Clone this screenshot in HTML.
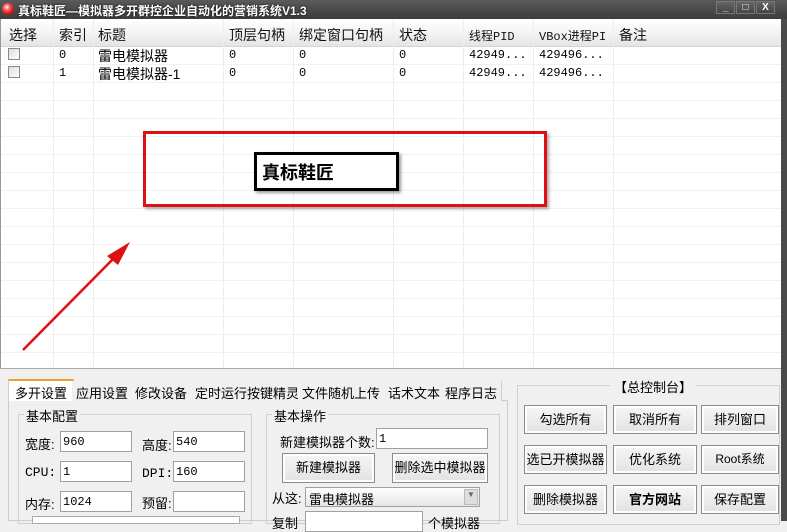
<!DOCTYPE html>
<html><head><meta charset="utf-8"><style>
*{margin:0;padding:0;box-sizing:border-box}
body{width:787px;height:521px;overflow:hidden;background:#f0f0f0;font-family:"Liberation Sans","Noto Sans CJK SC","WenQuanYi Zen Hei",sans-serif;font-size:13px;color:#000;position:relative}
.a{position:absolute;white-space:nowrap}
.title{left:0;top:0;width:787px;height:19px;background:linear-gradient(#5a5a5a,#3c3c3c);}
.tb{top:1px;width:19px;height:13px;border:1px solid #777;background:linear-gradient(#666,#444);color:#fff;font-size:10px;text-align:center;line-height:11px;font-weight:bold}
.list{left:0;top:19px;width:781px;height:350px;background:#fff;border-left:1px solid #999;border-bottom:1px solid #aaa;overflow:hidden}
.hdr{left:0;top:0;width:781px;height:28px;background:linear-gradient(#fff 0%,#f4f4f4 50%,#e4e4e4 100%);border-bottom:1px solid #d5d5d5}
.vl{top:0;width:1px;height:350px;background:#ededed}
.hl{left:0;height:1px;width:781px;background:#f1f1f1}
.h{top:6px;font-size:14px;color:#111}
.c{font-size:12px;font-family:"Liberation Mono","Noto Sans CJK SC",monospace}
.cb{width:12px;height:12px;border:1px solid #8a8a8a;background:linear-gradient(135deg,#ddd,#fff)}
.inp{background:#fff;border:1px solid #a0a0a0;height:21px;font-size:12px;padding:3px 0 0 2px;font-family:"Liberation Mono",monospace}
.btn{border:1px solid #8c8c8c;background:linear-gradient(#f6f6f6,#e2e2e2);box-shadow:inset 0 0 0 2px #fdfdfd;text-align:center;font-size:13px}
.grp{border:1px solid #d0d0d0}
.lbl{font-size:13px}
.tab{top:381px;height:20px;font-size:13px;padding:2px 4px 0 4px;border-right:1px solid #ccc;background:#f0f0f0}
</style></head><body>
<div class="a title"></div>
<div class="a" style="left:2px;top:3px;width:12px;height:12px;border-radius:50%;background:radial-gradient(circle at 40% 35%,#fff 0,#f55 30%,#a00 80%)"></div>
<div class="a" style="left:18px;top:2px;color:#fff;font-weight:bold;font-size:12px;text-shadow:0 0 2px #000">真标鞋匠—模拟器多开群控企业自动化的营销系统V1.3</div>
<div class="a tb" style="left:716px">_</div><div class="a tb" style="left:736px">□</div><div class="a tb" style="left:756px">X</div>
<div class="a" style="left:781px;top:19px;width:6px;height:502px;background:#4a4a4a"></div>

<div class="a list">
<div class="a hdr"></div>
<div class="a hl" style="top:45px"></div>
<div class="a hl" style="top:63px"></div>
<div class="a hl" style="top:81px"></div><div class="a hl" style="top:99px"></div><div class="a hl" style="top:117px"></div><div class="a hl" style="top:135px"></div><div class="a hl" style="top:153px"></div><div class="a hl" style="top:171px"></div><div class="a hl" style="top:189px"></div><div class="a hl" style="top:207px"></div><div class="a hl" style="top:225px"></div><div class="a hl" style="top:243px"></div><div class="a hl" style="top:261px"></div><div class="a hl" style="top:279px"></div><div class="a hl" style="top:297px"></div><div class="a hl" style="top:315px"></div><div class="a hl" style="top:333px"></div>
<div class="a vl" style="left:52px"></div><div class="a vl" style="left:92px"></div><div class="a vl" style="left:222px"></div><div class="a vl" style="left:292px"></div><div class="a vl" style="left:392px"></div><div class="a vl" style="left:462px"></div><div class="a vl" style="left:532px"></div><div class="a vl" style="left:612px"></div>
<div class="a h" style="left:8px">选择</div><div class="a h" style="left:58px">索引</div><div class="a h" style="left:97px">标题</div><div class="a h" style="left:228px">顶层句柄</div><div class="a h" style="left:298px">绑定窗口句柄</div><div class="a h" style="left:398px">状态</div><div class="a h c" style="left:468px;top:8px">线程PID</div><div class="a h c" style="left:538px;top:8px">VBox进程PI</div><div class="a h" style="left:618px">备注</div>
<div class="a cb" style="left:7px;top:29px"></div><div class="a cb" style="left:7px;top:47px"></div>
<div class="a c" style="left:58px;top:29px">0</div><div class="a" style="left:97px;top:27px;font-size:14px">雷电模拟器</div><div class="a c" style="left:228px;top:29px">0</div><div class="a c" style="left:298px;top:29px">0</div><div class="a c" style="left:398px;top:29px">0</div><div class="a c" style="left:468px;top:29px">42949...</div><div class="a c" style="left:538px;top:29px">429496...</div>
<div class="a c" style="left:58px;top:47px">1</div><div class="a" style="left:97px;top:45px;font-size:14px">雷电模拟器-1</div><div class="a c" style="left:228px;top:47px">0</div><div class="a c" style="left:298px;top:47px">0</div><div class="a c" style="left:398px;top:47px">0</div><div class="a c" style="left:468px;top:47px">42949...</div><div class="a c" style="left:538px;top:47px">429496...</div>
</div>

<div class="a" style="left:143px;top:131px;width:404px;height:76px;border:3px solid #dd1111;box-shadow:2px 2px 3px rgba(0,0,0,.35)"></div>
<div class="a" style="left:254px;top:152px;width:145px;height:39px;border:3px solid #000;background:#fff;box-shadow:2px 2px 3px rgba(0,0,0,.4)"></div>
<div class="a" style="left:262px;top:159px;font-size:18px;font-weight:bold">真标鞋匠</div>
<svg class="a" style="left:0;top:0" width="787" height="521"><line x1="23" y1="350" x2="118" y2="254" stroke="#dd1111" stroke-width="2.5"/><polygon points="130,242 107,256 118,265" fill="#dd1111"/></svg>

<div class="a" style="left:8px;top:400px;width:500px;height:121px;border:1px solid #ccc;background:#f0f0f0"></div>
<div class="a tab" style="left:8px;top:379px;height:22px;background:#fff;border:1px solid #ccc;border-top:2px solid #f0a030;border-bottom:none;padding:2px 6px 0 6px">多开设置</div>
<div class="a tab" style="left:72px">应用设置</div><div class="a tab" style="left:131px">修改设备</div><div class="a tab" style="left:191px">定时运行按键精灵</div><div class="a tab" style="left:298px">文件随机上传</div><div class="a tab" style="left:384px">话术文本</div><div class="a tab" style="left:441px">程序日志</div>

<div class="a grp" style="left:18px;top:414px;width:234px;height:110px"></div>
<div class="a lbl" style="left:24px;top:406px;background:#f0f0f0;padding:0 2px">基本配置</div>
<div class="a lbl" style="left:25px;top:434px">宽度:</div><div class="a inp" style="left:60px;top:431px;width:72px">960</div>
<div class="a lbl" style="left:142px;top:435px">高度:</div><div class="a inp" style="left:173px;top:431px;width:72px">540</div>
<div class="a lbl c" style="left:25px;top:465px">CPU:</div><div class="a inp" style="left:60px;top:461px;width:72px">1</div>
<div class="a lbl c" style="left:142px;top:466px">DPI:</div><div class="a inp" style="left:173px;top:461px;width:72px">160</div>
<div class="a lbl" style="left:25px;top:494px">内存:</div><div class="a inp" style="left:60px;top:491px;width:72px">1024</div>
<div class="a lbl" style="left:142px;top:493px">预留:</div><div class="a inp" style="left:173px;top:491px;width:72px"></div>
<div class="a" style="left:32px;top:516px;width:208px;height:8px;border:1px solid #aaa;background:#fff"></div>

<div class="a grp" style="left:266px;top:414px;width:234px;height:110px"></div>
<div class="a lbl" style="left:272px;top:406px;background:#f0f0f0;padding:0 2px">基本操作</div>
<div class="a lbl" style="left:280px;top:432px">新建模拟器个数:</div><div class="a inp" style="left:376px;top:428px;width:112px">1</div>
<div class="a btn" style="left:282px;top:453px;width:93px;height:30px;line-height:28px">新建模拟器</div>
<div class="a btn" style="left:392px;top:453px;width:96px;height:30px;line-height:28px">删除选中模拟器</div>
<div class="a lbl" style="left:272px;top:488px">从这:</div>
<div class="a" style="left:305px;top:487px;width:175px;height:20px;border:1px solid #a0a0a0;background:linear-gradient(#fff,#e6e6e6);font-size:13px;padding:1px 0 0 3px">雷电模拟器</div>
<div class="a" style="left:464px;top:489px;width:14px;height:16px;background:#ddd;border:1px solid #bbb;font-size:8px;text-align:center;color:#666">▼</div>
<div class="a lbl" style="left:272px;top:513px">复制</div><div class="a inp" style="left:305px;top:511px;width:118px"></div><div class="a lbl" style="left:428px;top:513px">个模拟器</div>

<div class="a grp" style="left:517px;top:385px;width:263px;height:140px"></div>
<div class="a lbl" style="left:610px;top:377px;background:#f0f0f0;padding:0 4px">【总控制台】</div>
<div class="a btn" style="left:524px;top:405px;width:83px;height:29px;line-height:27px">勾选所有</div>
<div class="a btn" style="left:613px;top:405px;width:84px;height:29px;line-height:27px">取消所有</div>
<div class="a btn" style="left:701px;top:405px;width:78px;height:29px;line-height:27px">排列窗口</div>
<div class="a btn" style="left:524px;top:445px;width:83px;height:29px;line-height:27px">选已开模拟器</div>
<div class="a btn" style="left:613px;top:445px;width:84px;height:29px;line-height:27px">优化系统</div>
<div class="a btn" style="left:701px;top:445px;width:78px;height:29px;line-height:27px;font-size:12px">Root系统</div>
<div class="a btn" style="left:524px;top:485px;width:83px;height:29px;line-height:27px">删除模拟器</div>
<div class="a btn" style="left:613px;top:485px;width:84px;height:29px;line-height:27px;font-weight:bold">官方网站</div>
<div class="a btn" style="left:701px;top:485px;width:78px;height:29px;line-height:27px">保存配置</div>
</body></html>
